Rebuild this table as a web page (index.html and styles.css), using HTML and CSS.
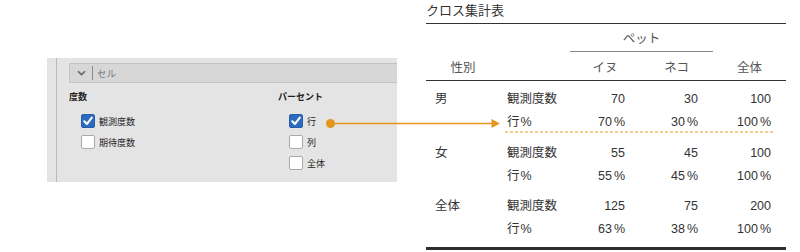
FILE: index.html
```html
<!DOCTYPE html>
<html lang="ja">
<head>
<meta charset="utf-8">
<title>クロス集計表</title>
<link rel="stylesheet" href="styles.css">
</head>
<body>
<div class="page">
  <div class="left">
    <div class="panel">
      <div class="panel-inner">
        <div class="bar">
          <svg class="chev" width="9" height="6" viewBox="0 0 9 6"><path d="M1 1.2 L4.5 4.6 L8 1.2" fill="none" stroke="#666" stroke-width="1.6"/></svg>
          <span class="bar-sep"></span>
          <span class="bar-label">セル</span>
        </div>
        <div class="cols">
          <div class="col col-a">
            <div class="heading">度数</div>
            <div class="checks">
              <div class="check"><span class="box on"><svg width="12" height="12" viewBox="0 0 12 12"><path d="M2.3 6.3 L4.9 9 L9.8 2.6" fill="none" stroke="#fff" stroke-width="2.1" stroke-linecap="round" stroke-linejoin="round"/></svg></span><span>観測度数</span></div>
              <div class="check"><span class="box"></span><span>期待度数</span></div>
            </div>
          </div>
          <div class="col col-b">
            <div class="heading">パーセント</div>
            <div class="checks">
              <div class="check"><span class="box on"><svg width="12" height="12" viewBox="0 0 12 12"><path d="M2.3 6.3 L4.9 9 L9.8 2.6" fill="none" stroke="#fff" stroke-width="2.1" stroke-linecap="round" stroke-linejoin="round"/></svg></span><span>行</span></div>
              <div class="check"><span class="box"></span><span>列</span></div>
              <div class="check"><span class="box"></span><span>全体</span></div>
            </div>
          </div>
        </div>
      </div>
    </div>
  </div>
  <div class="right">
    <div class="title">クロス集計表</div>
    <table class="ct">
      <colgroup>
        <col class="c1"><col class="c2"><col class="c3"><col class="c4"><col class="c5">
      </colgroup>
      <thead>
        <tr class="h1">
          <th></th><th></th><th colspan="2" class="pet">ペット</th><th></th>
        </tr>
        <tr class="h2">
          <th class="sex">性別</th><th></th><th>イヌ</th><th>ネコ</th><th>全体</th>
        </tr>
      </thead>
      <tbody>
        <tr class="first p7"><td class="g">男</td><td class="lab">観測度数</td><td class="n">70</td><td class="n">30</td><td class="n">100</td></tr>
        <tr><td></td><td class="lab">行<span class="pcl">%</span></td><td class="n">70<span class="pc">%</span></td><td class="n">30<span class="pc">%</span></td><td class="n">100<span class="pc">%</span></td></tr>
        <tr class="first p8"><td class="g">女</td><td class="lab">観測度数</td><td class="n">55</td><td class="n">45</td><td class="n">100</td></tr>
        <tr><td></td><td class="lab">行<span class="pcl">%</span></td><td class="n">55<span class="pc">%</span></td><td class="n">45<span class="pc">%</span></td><td class="n">100<span class="pc">%</span></td></tr>
        <tr class="first p7"><td class="g">全体</td><td class="lab">観測度数</td><td class="n">125</td><td class="n">75</td><td class="n">200</td></tr>
        <tr class="last"><td></td><td class="lab">行<span class="pcl">%</span></td><td class="n">63<span class="pc">%</span></td><td class="n">38<span class="pc">%</span></td><td class="n">100<span class="pc">%</span></td></tr>
      </tbody>
    </table>
    <div class="rule-thick"></div>
  </div>
</div>
<svg class="overlay" width="800" height="252" viewBox="0 0 800 252">
  <line x1="331" y1="123.5" x2="493" y2="123.5" stroke="#e3961e" stroke-width="1.5"/>
  <circle cx="330.5" cy="123.5" r="4.5" fill="#e3961e"/>
  <polygon points="491.5,119 500,123.5 491.5,128" fill="#e3961e"/>
  <line x1="505" y1="132" x2="775" y2="132" stroke="#e3961e" stroke-width="1" stroke-dasharray="3 2"/>
</svg>
</body>
</html>
```

FILE: styles.css
```css
html, body {
  margin: 0;
  padding: 0;
  background: #fff;
}
body {
  width: 800px;
  height: 252px;
  overflow: hidden;
  position: relative;
  font-family: "Liberation Sans", "Noto Sans CJK JP", sans-serif;
  color: #333;
}
.page {
  display: flex;
  align-items: flex-start;
}
.left {
  width: 379px;
  padding-left: 47px;
  padding-top: 58px;
}
.panel {
  width: 350px;
  height: 124px;
  background: #e4e4e4;
  padding-left: 9px;
  box-sizing: border-box;
  overflow: hidden;
}
.panel-inner {
  height: 100%;
  border-left: 1px solid #b9b9b9;
  padding-left: 12px;
  padding-top: 5px;
  box-sizing: border-box;
}
.bar {
  height: 20px;
  box-sizing: border-box;
  width: 340px;
  background: #d7d7d7;
  border: 1px solid #c3c3c3;
  border-right: none;
  border-radius: 2px 0 0 2px;
  display: flex;
  align-items: center;
  padding-left: 7px;
}
.chev {
  display: block;
}
.bar-sep {
  width: 1px;
  height: 14px;
  background: #8a8a8a;
  margin-left: 6px;
  margin-right: 4px;
}
.bar-label {
  font-size: 9.5px;
  color: #777;
}
.cols {
  display: flex;
  margin-top: 7px;
}
.col-a {
  width: 209px;
}
.heading {
  font-size: 9px;
  font-weight: bold;
  line-height: 14px;
  color: #222;
}
.checks {
  margin-top: 10px;
  display: flex;
  flex-direction: column;
  gap: 7px;
}
.check {
  display: flex;
  align-items: center;
  height: 14px;
  font-size: 9px;
  color: #222;
  padding-left: 12px;
}
.col-b .check {
  padding-left: 11px;
}
.box {
  width: 14px;
  height: 14px;
  box-sizing: border-box;
  border: 1px solid #a9a9a9;
  border-radius: 2px;
  background: #fff;
  margin-right: 4px;
  display: flex;
  align-items: center;
  justify-content: center;
}
.box.on {
  background: #2d6bc3;
  border-color: #2a5fa8;
}
.box svg {
  display: block;
}
.right {
  width: 360px;
}
.title {
  height: 23px;
  line-height: 21px;
  font-size: 13px;
  color: #333;
  border-bottom: 1px solid #333;
}
.ct {
  width: 360px;
  border-collapse: separate;
  border-spacing: 0;
  table-layout: fixed;
  font-size: 12.5px;
}
.c1 { width: 74px; }
.c2 { width: 70px; }
.c3 { width: 70px; }
.c4 { width: 73px; }
.c5 { width: 73px; }
.ct th {
  font-weight: normal;
  color: #555;
  text-align: center;
  padding: 0;
}
.h1 th {
  height: 27px;
  vertical-align: middle;
}
.h1 th.pet {
  border-bottom: 1px solid #888;
}
.h1 th:not(.pet) {
  border-bottom: 1px solid transparent;
}
.h2 th {
  height: 28px;
  border-bottom: 1px solid #333;
  vertical-align: middle;
}
.ct td {
  padding: 0;
  line-height: 23px;
  height: 23px;
  vertical-align: middle;
  white-space: nowrap;
}
.ct tr.p7 td { padding-top: 7px; }
.ct tr.p8 td { padding-top: 8px; }
.ct tr.last td { padding-bottom: 6px; }
.g {
  padding-left: 9px !important;
}
.lab {
  padding-left: 7px !important;
}
.n {
  text-align: right;
  padding-right: 15px !important;
}
.pc {
  margin-left: 2px;
}
.pcl {
  margin-left: 1px;
}
.rule-thick {
  height: 3px;
  background: #2e2e2e;
}
.overlay {
  position: absolute;
  left: 0;
  top: 0;
  pointer-events: none;
}
```
